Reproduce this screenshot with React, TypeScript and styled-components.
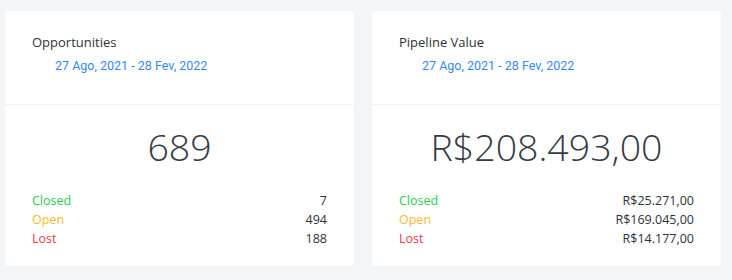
import React from "react";
import styled, { createGlobalStyle } from "styled-components";

const GlobalStyle = createGlobalStyle`
   html, body {
      margin: 0;
      padding: 0;
      background: #f2f6f9;
   }
   body {
      font-family: "Open Sans", "Noto Sans", sans-serif;
   }
`;

type Row = { label: string; value: string; tone: "closed" | "open" | "lost" };

const cards: { title: string; range: string; total: string; rows: Row[] }[] = [
   {
      title: "Opportunities",
      range: "27 Ago, 2021 - 28 Fev, 2022",
      total: "689",
      rows: [
         { label: "Closed", value: "7", tone: "closed" },
         { label: "Open", value: "494", tone: "open" },
         { label: "Lost", value: "188", tone: "lost" },
      ],
   },
   {
      title: "Pipeline Value",
      range: "27 Ago, 2021 - 28 Fev, 2022",
      total: "R$208.493,00",
      rows: [
         { label: "Closed", value: "R$25.271,00", tone: "closed" },
         { label: "Open", value: "R$169.045,00", tone: "open" },
         { label: "Lost", value: "R$14.177,00", tone: "lost" },
      ],
   },
];

const toneColors = {
   closed: "#2fcc4c",
   open: "#ffb72b",
   lost: "#f2364a",
};

function App() {
   return (
      <>
         <GlobalStyle />
         <Page>
            {cards.map((c, i) => (
               <Card key={i}>
                  <Header>
                     <Title>{c.title}</Title>
                     <Range>{c.range}</Range>
                  </Header>
                  <Body>
                     <Total>{c.total}</Total>
                     <List>
                        {c.rows.map((r) => (
                           <Line key={r.label}>
                              <Label $tone={r.tone}>{r.label}</Label>
                              <Value>{r.value}</Value>
                           </Line>
                        ))}
                     </List>
                  </Body>
               </Card>
            ))}
         </Page>
      </>
   );
}

export default App;

const Page = styled.div`
   display: flex;
   gap: 18px;
   padding: 11px 0 14px 5px;
   height: 280px;
   box-sizing: border-box;
`;

const Card = styled.div`
   width: 349px;
   background: #ffffff;
   border-radius: 3px;
   display: flex;
   flex-direction: column;
`;

const Header = styled.div`
   height: 94px;
   box-sizing: border-box;
   padding: 22px 27px 0;
   border-bottom: 1px solid #f0f2f4;
`;

const Title = styled.div`
   font-size: 13px;
   color: #2e3238;
   line-height: 18px;
`;

const Range = styled.div`
   margin-top: 6px;
   padding-left: 23px;
   font-family: Roboto, "Open Sans", sans-serif;
   font-size: 12.5px;
   color: #3389f4;
   line-height: 18px;
`;

const Body = styled.div`
   flex: 1;
   padding: 0 27px;
   display: flex;
   flex-direction: column;
`;

const Total = styled.div`
   margin-top: 17px;
   text-align: center;
   font-size: 37.5px;
   font-weight: 300;
   color: #353c45;
   line-height: 50px;
`;

const List = styled.div`
   margin-top: 19px;
   display: flex;
   flex-direction: column;
`;

const Line = styled.div`
   display: flex;
   justify-content: space-between;
   font-size: 12.5px;
   line-height: 19px;
`;

const Label = styled.span<{ $tone: Row["tone"] }>`
   color: ${(p) => toneColors[p.$tone]};
`;

const Value = styled.span`
   color: #2e3238;
`;
